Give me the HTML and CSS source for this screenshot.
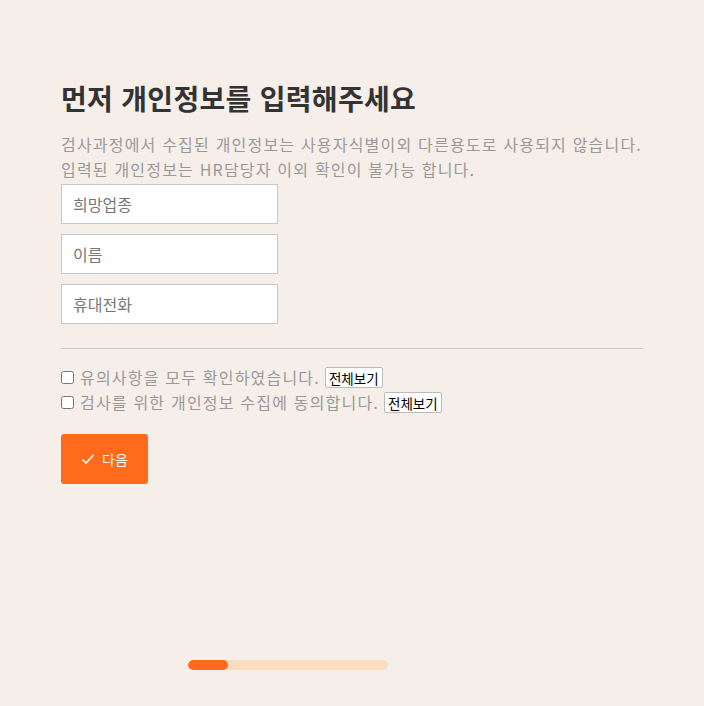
FILE: index.html
```html
<!DOCTYPE html>
<html lang="ko">
<head>
  <meta charset="UTF-8" />
  <title>개인정보 입력</title>
  <link rel="stylesheet" href="styles.css">
</head>
<body>
  <div class="wrap">
    <h2 class="title">먼저 개인정보를 입력해주세요</h2>
    <p class="desc">
      검사과정에서 수집된 개인정보는 사용자식별이외 다른용도로 사용되지 않습니다.<br />
      입력된 개인정보는 HR담당자 이외 확인이 불가능 합니다.
    </p>

    <div class="fields">
      <input type="text" placeholder="희망업종" />
      <input type="text" placeholder="이름" />
      <input type="text" placeholder="휴대전화" />
    </div>

    <hr class="line" />

    <div class="agree">
      <label><input type="checkbox" /> 유의사항을 모두 확인하였습니다. <button class="more">전체보기</button></label>
      <label><input type="checkbox" /> 검사를 위한 개인정보 수집에 동의합니다. <button class="more">전체보기</button></label>
    </div>

    <button class="next">
      <svg width="14" height="14" viewBox="0 0 14 14"><path d="M1.5 7.5 L5 11 L12.5 3" fill="none" stroke="#fff" stroke-width="1.6" /></svg>
      다음
    </button>
  </div>

  <div class="progress">
    <div class="bar" style="width: 20%;"></div>
  </div>
</body>
</html>
```

FILE: styles.css
```css
body {
  background-color: #f6eee9;
  font-family: "Noto Sans CJK KR", "Noto Sans", sans-serif;
  margin: 0;
  height: 706px;
  position: relative;
}

.wrap {
  padding: 76px 61px 0 61px;
}

.title {
  margin: 0;
  font-size: 28px;
  font-weight: bold;
  color: #333;
  letter-spacing: 0.3px;
  line-height: 44px;
}

.desc {
  margin: 12px 0 2px;
  font-size: 16px;
  line-height: 25px;
  color: #999;
  letter-spacing: 1.2px;
  white-space: nowrap;
}

.fields {
  display: flex;
  flex-direction: column;
  gap: 10px;
}

.fields input {
  width: 217px;
  height: 40px;
  box-sizing: border-box;
  border: 1px solid #c8c8c8;
  background: #fff;
  padding: 0 11px;
  font-family: inherit;
  font-size: 16px;
  color: #555;
  margin: 0;
}

.fields input::placeholder {
  color: #777;
}

.line {
  border: none;
  border-top: 1px solid #ccc;
  margin: 24px 0 0;
}

.agree {
  margin-top: 16px;
}

.agree label {
  display: flex;
  align-items: center;
  font-size: 16px;
  color: #999;
  height: 25px;
  line-height: 25px;
  letter-spacing: 1.2px;
}

.agree input {
  margin: 0 6px 0 0;
  width: 13px;
  height: 13px;
}

.more {
  margin-left: 5px;
  font-family: inherit;
  font-size: 13.5px;
  line-height: 18px;
  padding: 0 3px;
  height: 21px;
  background: #fff;
  border: 1px solid #bbb;
  border-radius: 2px;
  color: #000;
  letter-spacing: 0;
}

.next {
  margin-top: 19px;
  width: 87px;
  height: 50px;
  background: #ff6b1a;
  border: none;
  border-radius: 3px;
  color: #fff;
  font-family: inherit;
  font-size: 14px;
  display: flex;
  align-items: center;
  justify-content: center;
  gap: 7px;
}

.progress {
  position: absolute;
  left: 188px;
  top: 660px;
  width: 200px;
  height: 10px;
  border-radius: 5px;
  background: #fadcc0;
  overflow: hidden;
}

.bar {
  height: 100%;
  background: #ff6b1a;
  border-radius: 5px;
}
```
